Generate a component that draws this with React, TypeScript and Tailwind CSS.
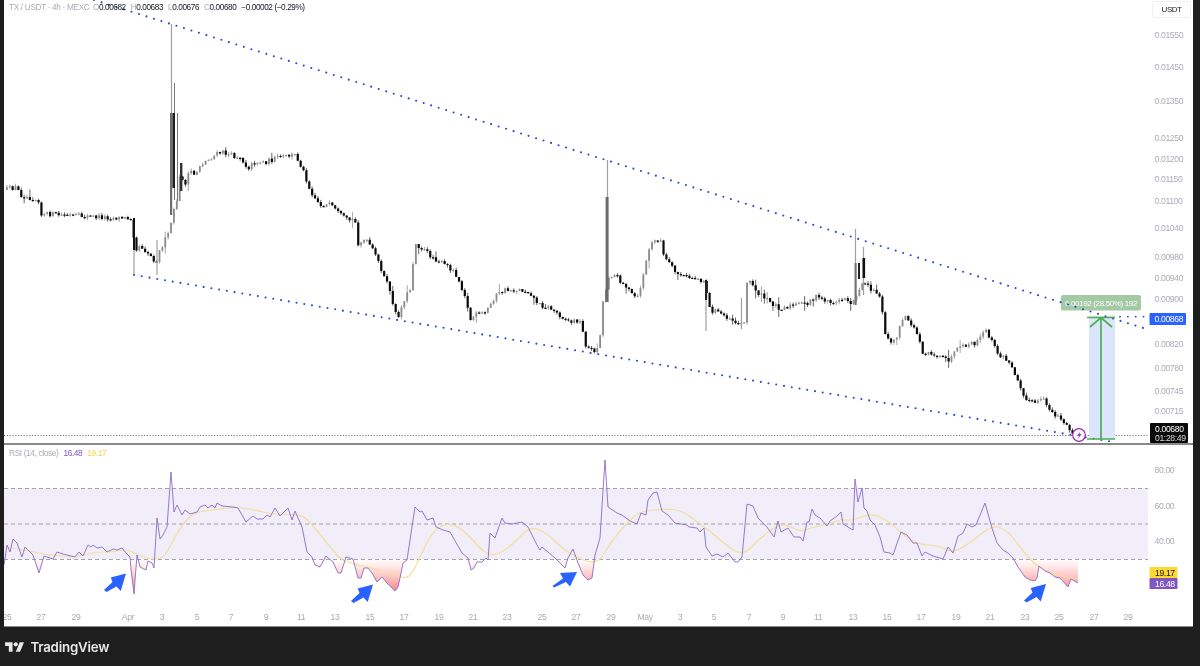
const KEY: [number, number][] = [
  [4,190],[17,187],[20,195],[35,199],[39,200],[41,215],[50,214],[60,215],[80,216],[100,217],[120,218],[132,218],[135,250],[140,245],[150,255],[156,262],[160,250],[165,240],[168,235],[178,195],[181,165],[184,190],[190,170],[195,175],[200,165],[205,162],[215,155],[222,152],[230,155],[240,157],[248,168],[255,162],[265,162],[280,157],[295,155],[300,163],[305,175],[310,190],[320,205],[330,205],[340,215],[347,220],[355,220],[358,243],[365,240],[370,245],[375,255],[380,265],[385,280],[390,290],[393,306],[397,318],[400,312],[405,297],[410,290],[415,243],[420,247],[430,255],[440,262],[450,268],[455,272],[460,283],[465,295],[470,320],[475,315],[485,313],[490,305],[495,296],[505,290],[515,290],[520,290],[530,292],[535,300],[540,305],[550,308],[560,315],[570,322],[578,320],[582,325],[584,342],[590,350],[597,350],[600,335],[603,302],[609,275],[615,275],[625,285],[632,295],[638,298],[642,280],[650,245],[660,237],[663,255],[668,262],[675,272],[685,277],[695,278],[705,281],[708,300],[710,310],[718,312],[730,318],[740,325],[744,322],[747,283],[750,282],[760,295],[770,302],[780,308],[790,306],[795,305],[807,303],[815,297],[825,300],[835,303],[845,298],[853,304],[858,290],[866,280],[870,288],[880,295],[882,310],[885,335],[890,340],[895,342],[900,325],[905,318],[910,322],[915,330],[920,340],[922,353],[930,352],[940,358],[950,360],[957,350],[967,345],[977,343],[985,330],[990,337],[997,353],[1007,360],[1017,377],[1025,397],[1033,403],[1043,400],[1053,413],[1060,417],[1067,427],[1072,433],[1076,436],
];
const RSI: [number, number][] = [
  [4,565],[7,545],[10,552],[13,539],[17,543],[22,557],[25,547],[30,552],[33,555],[39,573],[44,556],[53,559],[57,552],[63,554],[75,557],[79,552],[83,556],[88,545],[91,547],[93,545],[97,548],[102,547],[107,552],[113,549],[117,550],[122,548],[126,553],[130,557],[131,570],[134,594],[137,555],[140,567],[146,570],[148,561],[152,563],[154,568],[157,518],[160,539],[163,535],[167,527],[171,472],[174,512],[177,505],[182,515],[185,510],[190,514],[197,512],[200,507],[205,505],[208,508],[212,505],[215,508],[217,503],[222,506],[233,507],[238,508],[242,515],[246,522],[253,516],[257,519],[263,519],[267,515],[270,517],[275,508],[280,516],[288,508],[292,520],[295,511],[302,527],[307,552],[312,557],[315,565],[320,567],[326,556],[333,562],[338,573],[341,573],[346,557],[353,559],[358,578],[361,578],[364,568],[368,568],[372,573],[377,582],[382,577],[387,583],[395,591],[398,587],[400,578],[403,563],[407,560],[415,507],[420,512],[422,511],[427,520],[433,518],[436,527],[443,530],[450,532],[462,553],[468,558],[471,570],[474,568],[477,562],[482,562],[486,558],[488,560],[490,533],[495,538],[502,518],[505,523],[512,524],[522,522],[528,527],[537,545],[540,550],[542,547],[548,552],[555,558],[565,568],[568,558],[573,549],[578,563],[583,575],[588,580],[592,578],[595,555],[600,538],[605,460],[608,507],[617,513],[622,515],[630,521],[637,524],[641,513],[646,515],[648,500],[653,493],[657,492],[662,511],[668,515],[675,523],[687,525],[689,527],[697,528],[700,532],[704,528],[706,547],[712,556],[717,554],[723,557],[728,553],[735,562],[738,562],[742,557],[747,504],[753,506],[758,518],[767,527],[774,537],[778,521],[781,532],[788,528],[794,537],[800,537],[803,541],[807,522],[809,522],[812,509],[815,515],[820,518],[827,526],[830,521],[837,516],[841,512],[843,524],[853,530],[855,479],[858,502],[862,488],[864,508],[867,511],[870,520],[875,525],[880,537],[884,552],[890,553],[893,555],[901,532],[907,535],[913,543],[917,543],[922,556],[925,552],[933,556],[943,559],[948,547],[953,553],[958,536],[963,533],[967,524],[972,527],[976,525],[985,503],[992,528],[997,543],[1003,550],[1008,553],[1013,558],[1018,567],[1025,577],[1030,580],[1035,581],[1037,578],[1039,566],[1045,571],[1050,573],[1055,577],[1060,578],[1068,587],[1071,579],[1078,583],
];
const MA: [number, number][] = [
  [4,547],[20,549],[33,552],[50,555],[73,557],[83,555],[97,552],[113,552],[127,549],[137,555],[153,560],[165,557],[173,540],[187,518],[197,512],[213,510],[233,507],[250,509],[277,515],[300,514],[310,522],[327,543],[340,559],[350,563],[367,567],[387,572],[398,577],[410,578],[420,557],[433,530],[450,522],[467,533],[483,552],[495,556],[510,547],[530,526],[547,533],[567,553],[597,566],[610,543],[627,523],[640,511],[667,509],[680,510],[700,523],[720,540],[742,557],[760,538],[782,522],[800,532],[810,528],[833,523],[842,519],[850,521],[872,513],[890,522],[903,535],[920,545],[937,545],[953,553],[970,543],[992,525],[1007,530],[1020,547],[1033,563],[1047,572],[1067,578],[1078,578],
];

const pts = (p: [number, number][]) => p.map(([x, y]) => `${x},${y}`).join(" ");
const smooth = (p: [number, number][]) => {
  let d = `M${p[0][0]} ${p[0][1]}`;
  for (let i = 1; i < p.length - 1; i++) {
    const mx = (p[i][0] + p[i + 1][0]) / 2;
    const my = (p[i][1] + p[i + 1][1]) / 2;
    d += `Q${p[i][0]} ${p[i][1]} ${mx} ${my}`;
  }
  const l = p[p.length - 1];
  return `${d}L${l[0]} ${l[1]}`;
};

function interp(x: number) {
  for (let i = 1; i < KEY.length; i++) {
    if (x <= KEY[i][0]) {
      const [x0, y0] = KEY[i - 1];
      const [x1, y1] = KEY[i];
      return y0 + ((y1 - y0) * (x - x0)) / (x1 - x0);
    }
  }
  return KEY[KEY.length - 1][1];
}

let seed = 12345;
const rnd = () => {
  seed = (seed * 16807) % 2147483647;
  return seed / 2147483647;
};

const downBody: string[] = [];
const upBody: string[] = [];
const wicksDark: string[] = [];
const wicksLight: string[] = [];
let prev = interp(4);
for (let i = 1; i < 372; i++) {
  const x = +(4 + 2.88 * i).toFixed(2);
  const c = interp(x) + (rnd() - 0.5) * 5;
  const up = c < prev;
  const top = Math.min(c, prev);
  const bot = Math.max(c, prev);
  const h = Math.max(bot - top, 1.2);
  const big = rnd() > 0.85 ? 8 : 2.5;
  const wt = +(top - rnd() * big).toFixed(1);
  const wb = +(bot + rnd() * big).toFixed(1);
  (up ? wicksLight : wicksDark).push(`M${x} ${wt}V${wb}`);
  const w = up ? 1.8 : 2.2;
  (up ? upBody : downBody).push(`M${x - w / 2} ${top.toFixed(1)}h${w}v${h.toFixed(1)}h${-w}z`);
  prev = c;
}

const PRICE_LABELS: [string, number][] = [
  ["0.01550",35],["0.01450",67],["0.01350",101],["0.01250",138],["0.01200",159],["0.01150",179],["0.01100",201],["0.01040",228],["0.00980",257],["0.00940",278],["0.00900",299],["0.00820",344],["0.00780",368],["0.00745",391],["0.00715",411],
];
const DATES: [string, number][] = [
  ["25",7],["27",41],["29",76],["Apr",128],["3",162],["5",197],["7",231],["9",266],["11",301],["13",335],["15",370],["17",404],["19",439],["21",473],["23",507],["25",542],["27",576],["29",611],["May",645],["3",680],["5",714],["7",749],["9",783],["11",818],["13",853],["15",887],["17",921],["19",956],["21",990],["23",1025],["25",1059],["27",1094],["29",1128],
];
const ARROW = "126,573.5 120.7,591 116.5,586.5 106.5,592 104,590 112.5,582 110.7,577.5";

const DOT = "#2f46d8";
const AXIS = "#a9acb6";
const FS = 8.6;
const LS = -0.35;

export default function App() {
  return (
    <div className="flex h-[666px] w-[1200px] flex-col overflow-hidden bg-[#1e1e1e] font-['Liberation_Sans',sans-serif] blur-[0.3px]">
      <div className="flex h-[627px] pl-1 pr-[7px]">
        <div className="relative flex flex-1 flex-col border-b border-[#8a8a8a] bg-white">
          <div className="absolute left-[5px] top-[3px] flex text-[8.2px] leading-[10px] tracking-[-0.4px] text-[#131722]">
            <span className="w-[84px] text-[#a9acb6] tracking-[-0.3px]">TX / USDT · 4h · MEXC</span>
            <span className="flex gap-[5px]">
              <span><span className="text-[#a9acb6]">O</span>0.00682</span>
              <span><span className="text-[#a9acb6]">H</span>0.00683</span>
              <span><span className="text-[#a9acb6]">L</span>0.00676</span>
              <span><span className="text-[#a9acb6]">C</span>0.00680</span>
              <span>−0.00002 (−0.29%)</span>
            </span>
          </div>
          <div className="absolute right-[2px] top-[1px] flex h-[17px] w-[39px] items-center justify-center rounded-[3px] border border-[#f0f0f3] bg-white text-[8px] tracking-[-0.5px] text-[#131722]">
            USDT
          </div>
          <div className="absolute left-[5px] top-[448px] flex gap-[5px] text-[8.4px] leading-[10px] tracking-[-0.4px]">
            <span className="text-[#a9acb6]">RSI (14, close)</span>
            <span className="text-[#7e57c2]">16.48</span>
            <span className="text-[#f2d54a]">19.17</span>
          </div>

          <svg className="block h-[443px] w-full shrink-0" viewBox="4 0 1189 443">
            <line x1="4" y1="435.5" x2="1148" y2="435.5" stroke="#555" strokeWidth="0.8" strokeDasharray="1.2 1.6" />

            <path d={wicksLight.join("")} stroke="#a8a8a8" strokeWidth="1" fill="none" />
            <path d={wicksDark.join("")} stroke="#666" strokeWidth="1" fill="none" />
            <path d={upBody.join("")} fill="#8c8c8c" />
            <path d={downBody.join("")} fill="#0a0a0a" />

            <path d="M171.5 24V113M134 250V275M157 240V275M607.5 160V197M855.5 229V263M863.5 247V295M741.5 298V329M706 300V331" stroke="#a0a0a0" strokeWidth="1.2" fill="none" />
            <path d="M174.5 83V200M177.5 113V201" stroke="#777" strokeWidth="1" fill="none" />
            <rect x="170" y="113" width="2.2" height="102" fill="#6e6e6e" />
            <rect x="172.4" y="113" width="2.6" height="75" fill="#222" />
            <rect x="180" y="163" width="2.4" height="28" fill="#333" />
            <rect x="133" y="218" width="2" height="32" fill="#111" />
            <rect x="605.6" y="197" width="3" height="105" fill="#6a6a6a" />
            <rect x="854.5" y="263" width="2.2" height="42" fill="#777" />
            <rect x="858" y="263" width="2" height="16" fill="#222" />
            <rect x="862.5" y="258" width="2.6" height="20" fill="#111" />
            <rect x="705" y="280" width="2" height="20" fill="#222" />

            {/* measure tool */}
            <rect x="1089" y="316" width="26" height="123" fill="#dbe5fb" />
            <rect x="1061" y="295" width="80" height="15.5" rx="2" fill="#a3c9a5" />
            <text x="1101" y="305.7" textAnchor="middle" fontSize="7.9" letterSpacing="-0.3" fill="#ffffff">0.00192 (28.50%) 192</text>

            <line x1="94" y1="0" x2="1148" y2="329.5" stroke={DOT} strokeWidth="2.1" strokeLinecap="round" strokeDasharray="0 7.85" />
            <line x1="134" y1="275" x2="1113" y2="442" stroke={DOT} strokeWidth="2.1" strokeLinecap="round" strokeDasharray="0 7.85" />
            <line x1="1120" y1="316.7" x2="1146" y2="316.7" stroke={DOT} strokeWidth="1.8" strokeLinecap="round" strokeDasharray="0 7.85" />

            <path d="M1087 317.5H1115M1101 317V439M1087 439H1115M1090 327L1101 317.5L1112 327" stroke="#4caf50" strokeWidth="1.7" fill="none" />

            {PRICE_LABELS.map(([t, y]) => (
              <text key={t} x="1154.5" y={y + 3} fontSize={FS} letterSpacing={LS} fill={AXIS}>{t}</text>
            ))}
            <rect x="1149.5" y="313" width="36.5" height="12" rx="1" fill="#2962ff" />
            <text x="1154.5" y="322" fontSize={FS} letterSpacing={LS} fill="#ffffff">0.00868</text>
            <rect x="1150" y="423" width="38" height="20" rx="1" fill="#0a0a0a" />
            <text x="1155" y="431.7" fontSize={FS} letterSpacing={LS} fill="#ffffff">0.00680</text>
            <text x="1155" y="440.7" fontSize={FS} letterSpacing={LS} fill="#d6d6d6">01:28:49</text>

            <circle cx="1079" cy="435" r="6.3" fill="#ffffff" stroke="#9c27b0" strokeWidth="1.2" />
            <path d="M1080.8 431L1076.8 435.8H1079.2L1077.6 439L1081.6 434.2H1079.2Z" fill="#9c27b0" />
          </svg>

          <div className="h-[2px] w-full shrink-0 bg-[#8a8a8a]" />

          <svg className="block w-full flex-1" viewBox="4 445 1189 181">
            <defs>
              <linearGradient id="os" gradientUnits="userSpaceOnUse" x1="0" y1="559" x2="0" y2="594">
                <stop offset="0" stopColor="#ff8a80" stopOpacity="0" />
                <stop offset="1" stopColor="#f0606a" stopOpacity="0.85" />
              </linearGradient>
              <clipPath id="below"><rect x="4" y="559" width="1144" height="60" /></clipPath>
            </defs>
            <rect x="4" y="488" width="1144" height="71" fill="#f1edf9" />
            <path d="M4 488.5H1148M4 524H1148M4 559.5H1148" stroke="#9a97a8" strokeWidth="0.9" strokeDasharray="4 3" fill="none" />
            <polygon points={`4,559 ${pts(RSI)} 1078,559`} fill="url(#os)" clipPath="url(#below)" />
            <path d={smooth(MA)} fill="none" stroke="#f3df9c" strokeWidth="1.2" />
            <polyline points={pts(RSI)} fill="none" stroke="#8a6cc6" strokeWidth="0.9" />

            <polygon points={ARROW} fill="#2962ff" />
            <polygon points={ARROW} fill="#2962ff" transform="translate(247 11)" />
            <polygon points="577,572 570,586.5 566,582 554,587.5 552.5,586 563,578.5 560,573" fill="#2962ff" />
            <polygon points={ARROW} fill="#2962ff" transform="translate(920 10.5)" />

            <text x="1154.5" y="473" fontSize={FS} letterSpacing={LS} fill={AXIS}>80.00</text>
            <text x="1154.5" y="509" fontSize={FS} letterSpacing={LS} fill={AXIS}>60.00</text>
            <text x="1154.5" y="544" fontSize={FS} letterSpacing={LS} fill={AXIS}>40.00</text>
            <rect x="1149.5" y="567" width="28" height="11" rx="1" fill="#fdd835" />
            <text x="1155" y="575.7" fontSize={FS} letterSpacing={LS} fill="#131722">19.17</text>
            <rect x="1149.5" y="578" width="28" height="11" rx="1" fill="#7e57c2" />
            <text x="1155" y="586.7" fontSize={FS} letterSpacing={LS} fill="#ffffff">16.48</text>

            {DATES.map(([t, x], i) => (
              <text key={i} x={x} y="620" textAnchor="middle" fontSize={FS} letterSpacing={LS} fill={AXIS}>{t}</text>
            ))}
          </svg>
        </div>
      </div>
      <div className="flex h-[39px] items-center gap-[6px] pl-[5px] pt-[2px]">
        <svg className="h-[15px] w-[19.4px]" viewBox="0 0 36 28" fill="#e8e8e8">
          <path d="M14 22H7V11H0V4h14v18zM28 22h-8l7.5-18h8L28 22z" />
          <circle cx="20" cy="8" r="4" />
        </svg>
        <span className="font-['Inter',sans-serif] text-[13.3px] font-semibold leading-none tracking-[-0.2px] text-[#e8e8e8]">TradingView</span>
      </div>
    </div>
  );
}
